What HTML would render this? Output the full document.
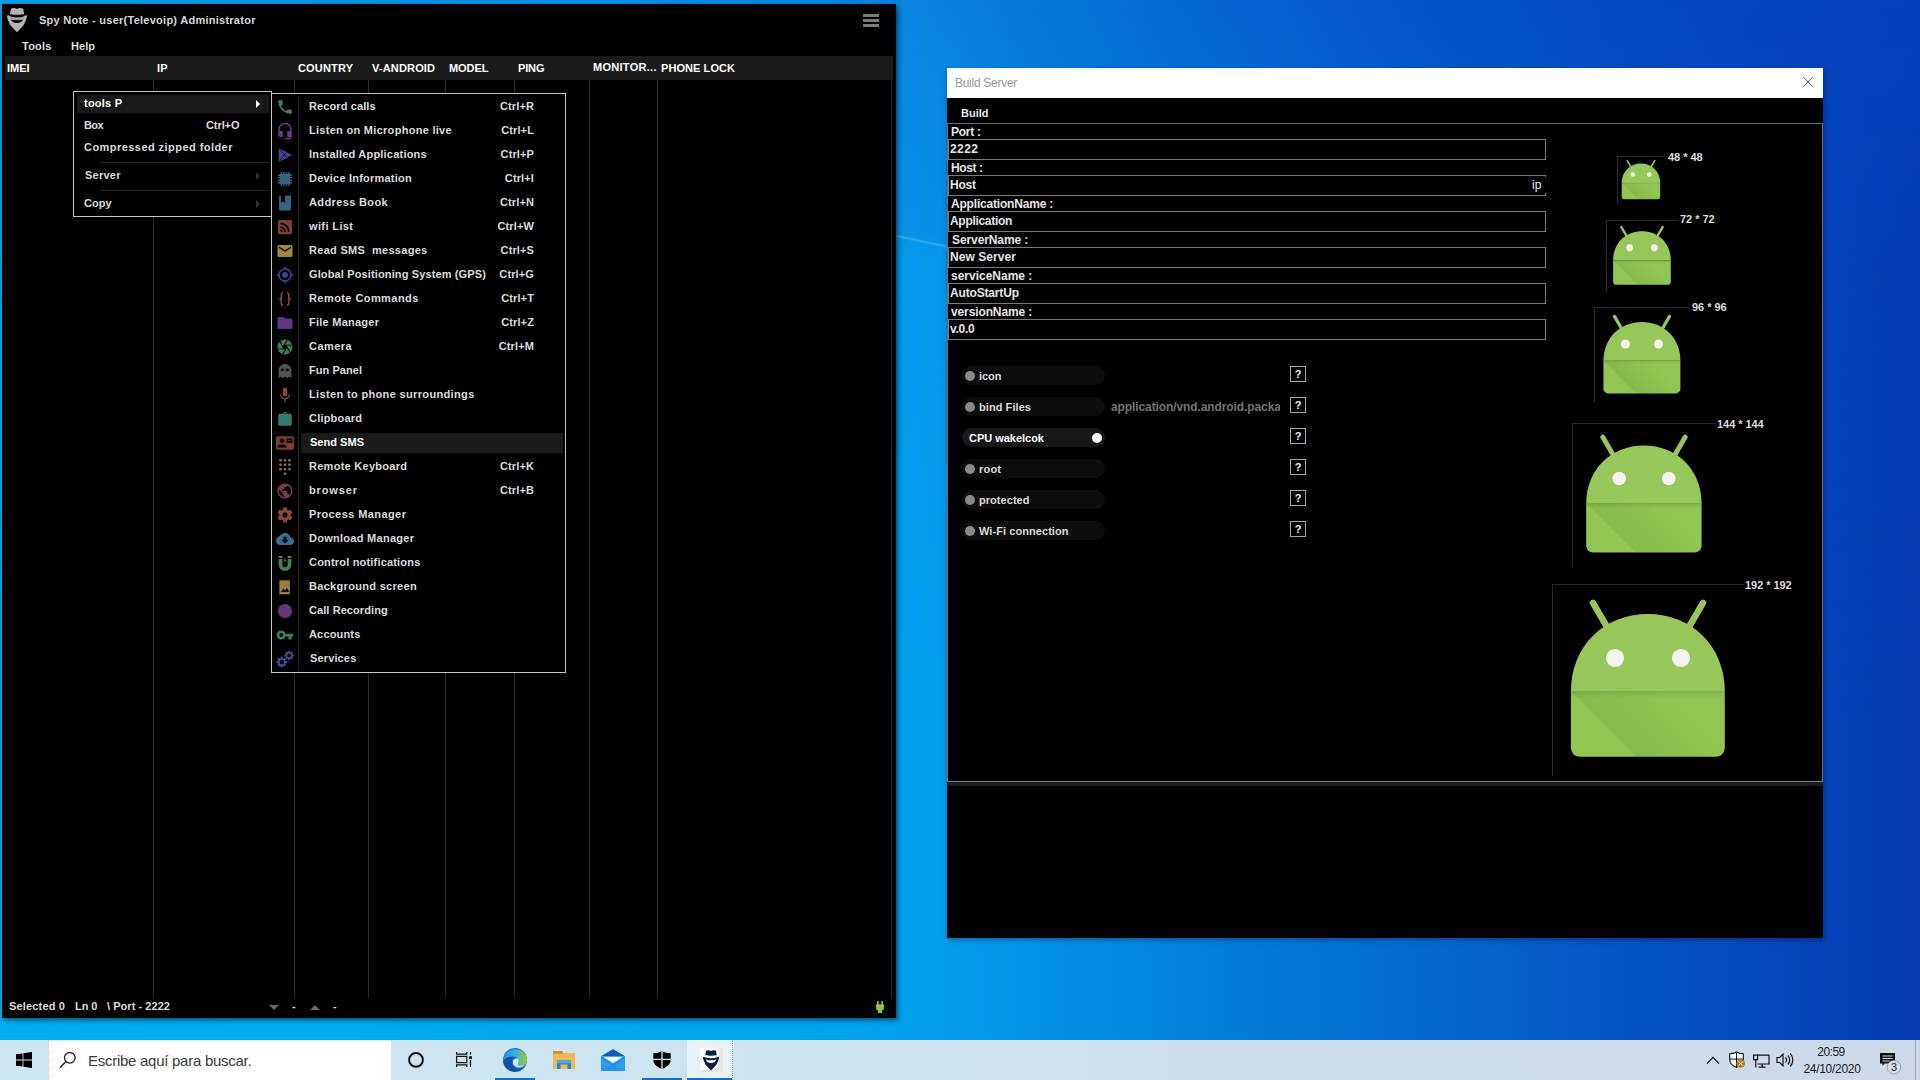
<!DOCTYPE html><html><head><meta charset="utf-8"><title>Desktop</title><style>
*{box-sizing:border-box;margin:0;padding:0}
html,body{width:1920px;height:1080px;overflow:hidden}
body{position:relative;font-family:"Liberation Sans",sans-serif;font-size:11px;color:#ddd;background:#0060d0}
.abs{position:absolute}
.t{position:absolute;white-space:pre;font-weight:bold;font-size:11px;letter-spacing:.3px;line-height:14px;color:#dcdcdc}
#wall{position:absolute;left:0;top:0;width:1920px;height:1080px;
 background:linear-gradient(90deg,#00a2ec 0,#0096e8 600px,#0a86e2 900px,#066cd6 1150px,#0556ca 1400px,#0548c2 1650px,#0542bc 1920px)}
#wall2{position:absolute;left:0;top:0;width:1920px;height:1080px;
 background:linear-gradient(90deg,#00aef0 0,#00a6ee 800px,#04a0f0 915px,#0286e0 1150px,#046cd2 1400px,#0552c4 1650px,#053cb4 1920px);
 -webkit-mask-image:linear-gradient(180deg,rgba(0,0,0,0) 0,rgba(0,0,0,.5) 230px,rgba(0,0,0,.78) 260px,#000 720px);
 mask-image:linear-gradient(180deg,rgba(0,0,0,0) 0,rgba(0,0,0,.5) 230px,rgba(0,0,0,.78) 260px,#000 720px)}
#main{position:absolute;left:2px;top:4px;width:894px;height:1014px;background:#000;box-shadow:2px 2px 5px rgba(0,0,0,.55)}
#bs{position:absolute;left:947px;top:68px;width:876px;height:870px;background:#000;box-shadow:1px 2px 5px rgba(0,0,30,.35)}
.vl{position:absolute;width:1px;height:918px;background:#25282c}
.menu{position:absolute;background:#000;border:1px solid #c6c6c6}
.sc{position:absolute;white-space:pre;font-weight:bold;font-size:11px;letter-spacing:.12px;line-height:14px;color:#dcdcdc;text-align:right}
.inp{position:absolute;left:1px;width:598px;height:21px;border:1px solid #7c7c7c}
.f12{position:absolute;white-space:pre;font-weight:bold;font-size:12px;line-height:14px;color:#e6e6e6}
.pill{position:absolute;left:15px;width:143px;height:19px;border-radius:10px;background:#0d0d0c}
.dot{position:absolute;width:10px;height:10px;border-radius:5px;background:#8a8888;top:5px}
.q{position:absolute;left:343px;width:16px;height:16px;border:1px solid #a8a8a8;color:#f0f0f0;font-weight:bold;font-size:11px;line-height:14px;text-align:center}
.szl{position:absolute;white-space:pre;font-weight:bold;font-size:11px;line-height:14px;color:#ddd}
#tb{position:absolute;left:0;top:1040px;width:1920px;height:40px;background:linear-gradient(90deg,#cce6f2 0,#cde3f0 45%,#ccdcec 70%,#cdd9eb 100%)}
</style></head><body>
<svg width="0" height="0" style="position:absolute"><defs>
<linearGradient id="dsh" gradientUnits="userSpaceOnUse" x1="52" y1="140" x2="100" y2="92"><stop offset="0" stop-color="#3c6e1e" stop-opacity=".13"/><stop offset="1" stop-color="#3c6e1e" stop-opacity="0"/></linearGradient>
<linearGradient id="dfold" gradientUnits="userSpaceOnUse" x1="0" y1="106" x2="0" y2="114"><stop offset="0" stop-color="#3c6e1e" stop-opacity=".24"/><stop offset="1" stop-color="#3c6e1e" stop-opacity="0"/></linearGradient>
<symbol id="droid" viewBox="0 0 192 192">
<g stroke="#97c65a" stroke-width="6.500" stroke-linecap="round"><path d="M41 18.800L58 48"/><path d="M151 18.800L134 48"/></g>
<path d="M18.900 107.500C18.900 62 52 30 95.850 30C139.700 30 172.800 62 172.800 107.500Z" fill="#97c65a"/>
<path d="M18.900 107H172.800V163.800a9 9 0 0 1-9 9H27.900a9 9 0 0 1-9-9Z" fill="#92c553"/>
<path d="M18.900 107H172.800V172.800H84.700Z" fill="url(#dsh)"/>
<path d="M18.900 107H172.800V114H18.900Z" fill="url(#dfold)"/>
<circle cx="63" cy="74" r="9.100" fill="#f1f5ec"/><circle cx="129" cy="74" r="9.100" fill="#f1f5ec"/>
</symbol>
</defs></svg>
<div id="wall"></div><div id="wall2"></div>
<div class="abs" style="left:896px;top:0;width:51px;height:1040px;overflow:hidden"><div class="abs" style="left:0;top:234px;width:56px;height:4px;transform-origin:0 0;transform:rotate(12deg);background:linear-gradient(180deg,rgba(120,200,255,.0),rgba(120,200,255,.4) 40%,rgba(120,200,255,0))"></div></div>
<div id="main">
<svg class="abs" style="left:2px;top:0px" width="30" height="32" viewBox="4 4 30 32"><g fill="#b4b4b4"><path d="M10 14.300L10.900 8.800Q14 7.300 17 8.900Q20 7.300 23.200 8.800L24.200 14.300Q17 15.400 10 14.300Z"/><path d="M6.800 15.800Q8 14.700 9.500 15.800Q17 18.600 24.600 15.800Q26 14.700 27.200 15.800L25.800 20.500L23.600 25.300L17 32.200L10.300 25.300L8.100 20.500Z"/></g><path d="M10.600 14.400Q17 16 23.600 14.400L23.800 16.400Q17 18.200 10.400 16.400Z" fill="#000"/><path d="M10.800 19.600Q17 21 23.200 19.600Q21.500 23 17 23Q12.500 23 10.800 19.600Z" fill="#000"/><path d="M10.300 17.400Q17 19.200 23.700 17.400L23.500 19.400Q17 20.800 10.500 19.400Z" fill="#9c9c9c"/></svg>
<div class="t" style="left:37px;top:9px;letter-spacing:0.259px;color:#d8d8d8;">Spy Note - user(Televoip) Administrator</div>
<div class="abs" style="left:861px;top:10px;width:16px;height:3px;background:#7a7a7a"></div>
<div class="abs" style="left:861px;top:15px;width:16px;height:3px;background:#7a7a7a"></div>
<div class="abs" style="left:861px;top:20px;width:16px;height:3px;background:#7a7a7a"></div>
<div class="t" style="left:20px;top:35px;letter-spacing:0.242px;">Tools</div>
<div class="t" style="left:69px;top:35px;letter-spacing:0.052px;">Help</div>
<div class="abs" style="left:3px;top:52px;width:888px;height:24px;background:#1b1b1b"></div>
<div class="t" style="left:5px;top:57px;letter-spacing:-0.042px;color:#fff;">IMEI</div>
<div class="t" style="left:155px;top:57px;letter-spacing:0.094px;color:#fff;">IP</div>
<div class="t" style="left:296px;top:57px;letter-spacing:0.172px;color:#fff;">COUNTRY</div>
<div class="t" style="left:370px;top:57px;letter-spacing:0.162px;color:#fff;">V-ANDROID</div>
<div class="t" style="left:447px;top:57px;letter-spacing:-0.055px;color:#fff;">MODEL</div>
<div class="t" style="left:516px;top:57px;letter-spacing:-0.135px;color:#fff;">PING</div>
<div class="t" style="left:591px;top:56px;letter-spacing:0.286px;color:#fff;">MONITOR...</div>
<div class="t" style="left:659px;top:57px;letter-spacing:0.073px;color:#fff;">PHONE LOCK</div>
<div class="vl" style="left:151px;top:76px"></div>
<div class="vl" style="left:292px;top:76px"></div>
<div class="vl" style="left:366px;top:76px"></div>
<div class="vl" style="left:443px;top:76px"></div>
<div class="vl" style="left:512px;top:76px"></div>
<div class="vl" style="left:587px;top:76px"></div>
<div class="vl" style="left:655px;top:76px"></div>
<div class="vl" style="left:889px;top:76px"></div>
<div class="t" style="left:7px;top:995px;letter-spacing:0.17px;">Selected 0</div>
<div class="t" style="left:73px;top:995px;letter-spacing:-0.042px;">Ln 0</div>
<div class="t" style="left:105px;top:995px;letter-spacing:0.049px;">\ Port - 2222</div>
<div class="abs" style="left:267px;top:1001px;width:0;height:0;border-left:5px solid transparent;border-right:5px solid transparent;border-top:5px solid #6a6a6a"></div>
<div class="t" style="left:290px;top:995px;">-</div>
<div class="abs" style="left:308px;top:1001px;width:0;height:0;border-left:5px solid transparent;border-right:5px solid transparent;border-bottom:5px solid #6a6a6a"></div>
<div class="t" style="left:331px;top:995px;">-</div>
<svg class="abs" style="left:873px;top:996px" width="10" height="14" viewBox="0 0 10 14"><path fill="#8bc34a" d="M2 1h1.600v3.200h2.800V1H8v3.200h1V8c0 1.500-1 2.300-2 2.800V13H3v-2.200C2 10.300 1 9.500 1 8V4.200h1z"/></svg>
<div class="menu" style="left:71px;top:87px;width:199px;height:126px">
<div class="abs" style="left:3px;top:3px;width:192px;height:18px;background:#1a1a1a"></div>
<div class="t" style="left:10px;top:4px;letter-spacing:0.219px;color:#fff;">tools P</div>
<div class="t" style="left:10px;top:26px;letter-spacing:-0.641px;">Box</div>
<div class="t" style="left:10px;top:48px;letter-spacing:0.448px;">Compressed zipped folder</div>
<div class="t" style="left:11px;top:76px;letter-spacing:0.244px;">Server</div>
<div class="t" style="left:10px;top:104px;letter-spacing:0.0px;">Copy</div>
<div class="t" style="left:132px;top:26px;letter-spacing:-0.084px;">Ctrl+O</div>
<div class="abs" style="left:26px;top:70px;width:169px;height:1px;background:#242424"></div>
<div class="abs" style="left:26px;top:98px;width:169px;height:1px;background:#242424"></div>
<div class="abs" style="left:182px;top:8px;width:0;height:0;border-top:4px solid transparent;border-bottom:4px solid transparent;border-left:4px solid #fff"></div>
<div class="abs" style="left:182px;top:80px;width:0;height:0;border-top:4px solid transparent;border-bottom:4px solid transparent;border-left:4px solid #333"></div>
<div class="abs" style="left:182px;top:108px;width:0;height:0;border-top:4px solid transparent;border-bottom:4px solid transparent;border-left:4px solid #333"></div>
</div>
<div class="menu" style="left:269px;top:89px;width:295px;height:580px">
<div class="abs" style="left:26px;top:2px;width:1px;height:574px;background:#242424"></div>
<div class="t" style="left:37px;top:5px;letter-spacing:0.112px;">Record calls</div>
<div class="sc" style="left:162px;width:100px;top:5px">Ctrl+R</div>
<svg class="abs" style="left:4px;top:4px;color:#38806f" width="18" height="18" viewBox="0 0 24 24" fill="#38806f"><path d="M6.62 10.79c1.44 2.83 3.76 5.14 6.59 6.59l2.2-2.2c.27-.27.67-.36 1.02-.24 1.12.37 2.33.57 3.57.57.55 0 1 .45 1 1V20c0 .55-.45 1-1 1-9.39 0-17-7.61-17-17 0-.55.45-1 1-1h3.5c.55 0 1 .45 1 1 0 1.25.2 2.45.57 3.57.11.35.03.74-.25 1.02l-2.2 2.2z"/></svg>
<div class="t" style="left:37px;top:29px;letter-spacing:0.29px;">Listen on Microphone live</div>
<div class="sc" style="left:162px;width:100px;top:29px">Ctrl+L</div>
<svg class="abs" style="left:4px;top:28px;color:#703b87" width="18" height="18" viewBox="0 0 24 24" fill="#703b87"><path d="M12 1c-4.97 0-9 4.03-9 9v7c0 1.66 1.34 3 3 3h3v-8H5v-2c0-3.870 3.130-7 7-7s7 3.130 7 7v2h-4v8h4v1h-7v2h6c1.660 0 3-1.340 3-3V10c0-4.970-4.030-9-9-9z"/></svg>
<div class="t" style="left:37px;top:53px;letter-spacing:0.207px;">Installed Applications</div>
<div class="sc" style="left:162px;width:100px;top:53px">Ctrl+P</div>
<svg class="abs" style="left:4px;top:52px;color:#424990" width="18" height="18" viewBox="0 0 24 24" fill="#424990"><path d="M3.500 2.500 L3.500 21.500 L21.500 12 Z"/><path d="M3.500 2.500 L14 15.500 M3.500 21.500 L14 8.500" stroke="#000" stroke-width=".8" fill="none"/></svg>
<div class="t" style="left:37px;top:77px;letter-spacing:0.214px;">Device Information</div>
<div class="sc" style="left:162px;width:100px;top:77px">Ctrl+I</div>
<svg class="abs" style="left:4px;top:76px;color:#35637e" width="18" height="18" viewBox="0 0 24 24" fill="#35637e"><path d="M5 5h14v14H5z"/><path d="M7 2.500v19M10.300 2.500v19M13.700 2.500v19M17 2.500v19M2.500 7h19M2.500 10.300h19M2.500 13.700h19M2.500 17h19" stroke-width="1.700" fill="none" stroke="currentColor"/></svg>
<div class="t" style="left:37px;top:101px;letter-spacing:0.373px;">Address Book</div>
<div class="sc" style="left:162px;width:100px;top:101px">Ctrl+N</div>
<svg class="abs" style="left:4px;top:100px;color:#35637e" width="18" height="18" viewBox="0 0 24 24" fill="#35637e"><path d="M18 2H6c-1.100 0-2 .900-2 2v16c0 1.100.900 2 2 2h12c1.100 0 2-.900 2-2V4c0-1.100-.900-2-2-2zM6.500 2h5.500v9.500l-2.750-1.700L6.500 11.500V2z"/></svg>
<div class="t" style="left:37px;top:125px;letter-spacing:0.379px;">wifi List</div>
<div class="sc" style="left:162px;width:100px;top:125px">Ctrl+W</div>
<svg class="abs" style="left:4px;top:124px;color:#7c4032" width="18" height="18" viewBox="0 0 24 24" fill="#7c4032"><rect x="2.500" y="2.500" width="19" height="19" rx="2.500"/><g fill="none" stroke="#000" stroke-width="2.200"><path d="M6 12.200a6 6 0 0 1 6 6"/><path d="M6 7.200a11 11 0 0 1 11 11"/></g><circle cx="7.300" cy="16.900" r="1.600" fill="#000"/></svg>
<div class="t" style="left:37px;top:149px;letter-spacing:0.301px;">Read SMS  messages</div>
<div class="sc" style="left:162px;width:100px;top:149px">Ctrl+S</div>
<svg class="abs" style="left:4px;top:148px;color:#9e8a39" width="18" height="18" viewBox="0 0 24 24" fill="#9e8a39"><path d="M20 4H4c-1.100 0-1.990.900-1.990 2L2 18c0 1.100.900 2 2 2h16c1.100 0 2-.900 2-2V6c0-1.100-.900-2-2-2zm0 4l-8 5-8-5V6l8 5 8-5v2z"/></svg>
<div class="t" style="left:37px;top:173px;letter-spacing:0.131px;">Global Positioning System (GPS)</div>
<div class="sc" style="left:162px;width:100px;top:173px">Ctrl+G</div>
<svg class="abs" style="left:4px;top:172px;color:#364c90" width="18" height="18" viewBox="0 0 24 24" fill="#364c90"><path d="M12 8c-2.210 0-4 1.790-4 4s1.790 4 4 4 4-1.790 4-4-1.790-4-4-4zm8.940 3c-.460-4.170-3.770-7.480-7.940-7.940V1h-2v2.060C6.830 3.520 3.520 6.830 3.060 11H1v2h2.060c.460 4.170 3.770 7.480 7.940 7.940V23h2v-2.060c4.170-.460 7.480-3.770 7.940-7.940H23v-2h-2.060zM12 19c-3.870 0-7-3.130-7-7s3.130-7 7-7 7 3.130 7 7-3.130 7-7 7z"/></svg>
<div class="t" style="left:37px;top:197px;letter-spacing:0.428px;">Remote Commands</div>
<div class="sc" style="left:162px;width:100px;top:197px">Ctrl+T</div>
<svg class="abs" style="left:4px;top:196px;color:#905134" width="18" height="18" viewBox="0 0 24 24" fill="#905134"><g fill="none" stroke="currentColor" stroke-width="1.900"><path d="M9.500 4C7.500 4 7 5 7 6.500v3C7 11 6.300 12 4.500 12 6.300 12 7 13 7 14.500v3C7 19 7.500 20 9.500 20"/><path d="M14.500 4c2 0 2.500 1 2.500 2.500v3c0 1.500.700 2.500 2.500 2.500-1.800 0-2.500 1-2.500 2.500v3c0 1.500-.500 2.500-2.500 2.500"/></g></svg>
<div class="t" style="left:37px;top:221px;letter-spacing:0.247px;">File Manager</div>
<div class="sc" style="left:162px;width:100px;top:221px">Ctrl+Z</div>
<svg class="abs" style="left:4px;top:220px;color:#633685" width="18" height="18" viewBox="0 0 24 24" fill="#633685"><path d="M10 4H4c-1.100 0-1.990.900-1.990 2L2 18c0 1.100.900 2 2 2h16c1.100 0 2-.900 2-2V8c0-1.100-.900-2-2-2h-8l-2-2z"/></svg>
<div class="t" style="left:37px;top:245px;letter-spacing:0.465px;">Camera</div>
<div class="sc" style="left:162px;width:100px;top:245px">Ctrl+M</div>
<svg class="abs" style="left:4px;top:244px;color:#427c54" width="18" height="18" viewBox="0 0 24 24" fill="#427c54"><path d="M9.400 10.500l4.770-8.260C13.470 2.090 12.750 2 12 2c-2.400 0-4.600.850-6.320 2.250l3.660 6.350.060-.100zM21.540 9c-.920-2.920-3.150-5.260-6-6.340L11.880 9h9.660zm.260 1h-7.490l.290.500 4.760 8.250C21 16.970 22 14.610 22 12c0-.690-.070-1.350-.200-2zM8.540 12l-3.900-6.750C3.010 7.030 2 9.390 2 12c0 .690.070 1.350.200 2h7.490l-1.150-2zm-6.080 3c.920 2.920 3.150 5.260 6 6.340L12.120 15H2.460zm11.270 0l-3.900 6.760c.700.150 1.420.240 2.170.240 2.400 0 4.600-.850 6.320-2.250l-3.660-6.350-.930 1.600z"/></svg>
<div class="t" style="left:37px;top:269px;letter-spacing:0.051px;">Fun Panel</div>
<svg class="abs" style="left:4px;top:268px;color:#525252" width="18" height="18" viewBox="0 0 24 24" fill="#525252"><path d="M12 2.500c-5 0-8.500 3.600-8.500 8.500v10.500l2.800-2.200 2.900 2.200 2.800-2.200 2.800 2.200 2.900-2.200 2.800 2.200V11c0-4.900-3.500-8.500-8.500-8.500z"/><circle cx="8.600" cy="10.500" r="1.900" fill="#000"/><circle cx="15.400" cy="10.500" r="1.900" fill="#000"/></svg>
<div class="t" style="left:37px;top:293px;letter-spacing:0.349px;">Listen to phone surroundings</div>
<svg class="abs" style="left:4px;top:292px;color:#904634" width="18" height="18" viewBox="0 0 24 24" fill="#904634"><path d="M12 14c1.660 0 2.990-1.340 2.990-3L15 5c0-1.660-1.340-3-3-3S9 3.340 9 5v6c0 1.660 1.340 3 3 3zm5.300-3c0 3-2.540 5.100-5.300 5.100S6.700 14 6.700 11H5c0 3.410 2.720 6.230 6 6.720V21h2v-3.280c3.280-.480 6-3.300 6-6.720h-1.700z"/></svg>
<div class="t" style="left:37px;top:317px;letter-spacing:0.207px;">Clipboard</div>
<svg class="abs" style="left:4px;top:316px;color:#387a6c" width="18" height="18" viewBox="0 0 24 24" fill="#387a6c"><path d="M19 5h-4.200C14.400 3.300 13.300 2.200 12 2.200S9.600 3.300 9.200 5H5c-1.100 0-2 .900-2 2v12c0 1.100.900 2 2 2h14c1.100 0 2-.900 2-2V7c0-1.100-.900-2-2-2zm-7-1.500c.700 0 1.300.600 1.400 1.500h-2.800c.100-.900.700-1.500 1.400-1.500z"/></svg>
<div class="abs" style="left:29px;top:339px;width:262px;height:20px;background:#1a1a1a"></div>
<div class="t" style="left:38px;top:341px;letter-spacing:0.027px;color:#fff;">Send SMS</div>
<svg class="abs" style="left:4px;top:340px;color:#7e3a2a" width="18" height="18" viewBox="0 0 24 24" fill="#7e3a2a"><path d="M21 8V7l-3 2-3-2v1l3 2 3-2zm1-5H2C.900 3 0 3.900 0 5v14c0 1.100.900 2 2 2h20c1.100 0 1.990-.900 1.990-2L24 5c0-1.100-.900-2-2-2zM8 6c1.660 0 3 1.340 3 3s-1.340 3-3 3-3-1.340-3-3 1.340-3 3-3zm6 12H2v-1c0-2 4-3.100 6-3.100s6 1.100 6 3.100v1zm8-6h-8V6h8v6z"/></svg>
<div class="t" style="left:37px;top:365px;letter-spacing:0.275px;">Remote Keyboard</div>
<div class="sc" style="left:162px;width:100px;top:365px">Ctrl+K</div>
<svg class="abs" style="left:4px;top:364px;color:#907c34" width="18" height="18" viewBox="0 0 24 24" fill="#907c34"><circle cx="6" cy="3" r="1.800"/><circle cx="6" cy="9" r="1.800"/><circle cx="6" cy="15" r="1.800"/><circle cx="12" cy="3" r="1.800"/><circle cx="12" cy="9" r="1.800"/><circle cx="12" cy="15" r="1.800"/><circle cx="18" cy="3" r="1.800"/><circle cx="18" cy="9" r="1.800"/><circle cx="18" cy="15" r="1.800"/><circle cx="12" cy="21" r="1.800"/></svg>
<div class="t" style="left:37px;top:389px;letter-spacing:0.865px;">browser</div>
<div class="sc" style="left:162px;width:100px;top:389px">Ctrl+B</div>
<svg class="abs" style="left:4px;top:388px;color:#7c3851" width="18" height="18" viewBox="0 0 24 24" fill="#7c3851"><path d="M12 2C6.480 2 2 6.480 2 12s4.480 10 10 10 10-4.480 10-10S17.520 2 12 2zm-1 17.930c-3.950-.490-7-3.850-7-7.930 0-.620.080-1.210.210-1.790L9 15v1c0 1.100.900 2 2 2v1.930zm6.900-2.540c-.260-.810-1-1.390-1.900-1.390h-1v-3c0-.550-.450-1-1-1H8v-2h2c.550 0 1-.450 1-1V7h2c1.100 0 2-.900 2-2v-.410c2.930 1.190 5 4.060 5 7.410 0 2.080-.800 3.970-2.100 5.390z"/></svg>
<div class="t" style="left:37px;top:413px;letter-spacing:0.417px;">Process Manager</div>
<svg class="abs" style="left:4px;top:412px;color:#904634" width="18" height="18" viewBox="0 0 24 24" fill="#904634"><path d="M19.430 12.980c.040-.320.070-.640.070-.980s-.030-.660-.070-.980l2.110-1.650c.190-.150.240-.420.120-.640l-2-3.460c-.120-.220-.390-.300-.610-.220l-2.490 1c-.520-.400-1.080-.730-1.690-.980l-.380-2.650C14.460 2.180 14.250 2 14 2h-4c-.250 0-.460.180-.490.420l-.380 2.650c-.610.250-1.170.590-1.690.980l-2.490-1c-.230-.090-.490 0-.610.220l-2 3.460c-.130.220-.070.490.120.640l2.110 1.650c-.040.320-.070.650-.070.980s.030.660.070.980l-2.110 1.650c-.190.150-.240.420-.120.640l2 3.460c.120.220.390.300.610.220l2.490-1c.520.400 1.080.730 1.690.980l.380 2.650c.030.240.240.420.490.420h4c.250 0 .460-.180.490-.420l.380-2.650c.610-.250 1.170-.590 1.690-.980l2.490 1c.230.090.490 0 .610-.220l2-3.460c.120-.220.070-.490-.120-.640l-2.110-1.650zM12 15.500c-1.930 0-3.500-1.570-3.500-3.500s1.570-3.500 3.500-3.500 3.500 1.570 3.500 3.500-1.570 3.500-3.500 3.500z"/></svg>
<div class="t" style="left:37px;top:437px;letter-spacing:0.275px;">Download Manager</div>
<svg class="abs" style="left:4px;top:436px;color:#386d97" width="18" height="18" viewBox="0 0 24 24" fill="#386d97"><path d="M19.350 10.040C18.670 6.590 15.640 4 12 4 9.110 4 6.600 5.640 5.350 8.040 2.340 8.360 0 10.910 0 14c0 3.310 2.690 6 6 6h13c2.760 0 5-2.240 5-5 0-2.640-2.050-4.780-4.650-4.960zM17 13l-5 5-5-5h3V9h4v4h3z"/></svg>
<div class="t" style="left:37px;top:461px;letter-spacing:0.187px;">Control notifications</div>
<svg class="abs" style="left:4px;top:460px;color:#42815d" width="18" height="18" viewBox="0 0 24 24" fill="#42815d"><path d="M3.500 6.500h5v7.500a3.500 3.500 0 0 0 7 0V6.500h5V14a8.500 8.500 0 0 1-17 0z"/><path d="M3.500 2.500h5v2.500h-5zM15.500 2.500h5v2.500h-5z" fill="#8f7e38"/><path d="M12.800 4l-2.600 5h1.800l-.800 4 2.800-5.200h-1.900z"/></svg>
<div class="t" style="left:37px;top:485px;letter-spacing:0.309px;">Background screen</div>
<svg class="abs" style="left:4px;top:484px;color:#978139" width="18" height="18" viewBox="0 0 24 24" fill="#978139"><path d="M5.500 2.500l1.500 1 1.500-1 1.500 1 1.500-1 1.500 1 1.500-1 1.500 1 1.500-1 1 .700V21.500H4.500V3.200z"/><path d="M6.500 18.500l3.500-4.500 2 2.500 2.500-3.500 3 5.500z" fill="#000"/></svg>
<div class="t" style="left:37px;top:509px;letter-spacing:0.08px;">Call Recording</div>
<svg class="abs" style="left:4px;top:508px;color:#633676" width="18" height="18" viewBox="0 0 24 24" fill="#633676"><circle cx="12" cy="12" r="9.500"/></svg>
<div class="t" style="left:37px;top:533px;letter-spacing:0.168px;">Accounts</div>
<svg class="abs" style="left:4px;top:532px;color:#427c51" width="18" height="18" viewBox="0 0 24 24" fill="#427c51"><path fill-rule="evenodd" d="M7 6a6 6 0 1 0 0 12a6 6 0 0 0 5.600-4H16.500v4h4.500v-4H23v-3.600H12.600A6 6 0 0 0 7 6zM7 9.400a2.600 2.600 0 1 1 0 5.200a2.600 2.600 0 0 1 0-5.200z"/></svg>
<div class="t" style="left:38px;top:557px;letter-spacing:0.141px;">Services</div>
<svg class="abs" style="left:4px;top:556px;color:#3d4f97" width="18" height="18" viewBox="0 0 24 24" fill="#3d4f97"><path fill-rule="evenodd" d="M14.53 14.77 L14.53 17.83 L12.69 17.75 L12.26 18.81 L13.61 20.05 L11.45 22.21 L10.21 20.86 L9.15 21.29 L9.23 23.13 L6.17 23.13 L6.25 21.29 L5.19 20.86 L3.95 22.21 L1.79 20.05 L3.14 18.81 L2.71 17.75 L0.87 17.83 L0.87 14.77 L2.71 14.85 L3.14 13.79 L1.79 12.55 L3.95 10.39 L5.19 11.74 L6.25 11.31 L6.17 9.47 L9.23 9.47 L9.15 11.31 L10.21 11.74 L11.45 10.39 L13.61 12.55 L12.26 13.79 L12.69 14.85Z M10.60 16.30 A2.9 2.9 0 1 0 4.80 16.30 A2.9 2.9 0 1 0 10.60 16.30Z"/><path fill-rule="evenodd" d="M23.75 5.90 L23.75 8.70 L22.01 8.61 L21.62 9.56 L22.90 10.73 L20.93 12.70 L19.76 11.42 L18.81 11.81 L18.90 13.55 L16.10 13.55 L16.19 11.81 L15.24 11.42 L14.07 12.70 L12.10 10.73 L13.38 9.56 L12.99 8.61 L11.25 8.70 L11.25 5.90 L12.99 5.99 L13.38 5.04 L12.10 3.87 L14.07 1.90 L15.24 3.18 L16.19 2.79 L16.10 1.05 L18.90 1.05 L18.81 2.79 L19.76 3.18 L20.93 1.90 L22.90 3.87 L21.62 5.04 L22.01 5.99Z M20.00 7.30 A2.5 2.5 0 1 0 15.00 7.30 A2.5 2.5 0 1 0 20.00 7.30Z"/></svg>
</div>
</div>
<div id="bs">
<div class="abs" style="left:0;top:0;width:876px;height:30px;background:#fff"></div>
<div class="abs" style="left:8px;top:7px;font-size:12px;color:#9a9a9a;line-height:16px;white-space:pre;letter-spacing:-0.278px">Build Server</div>
<svg class="abs" style="left:856px;top:9px" width="10" height="10" viewBox="0 0 10 10"><path d="M0.300 0.300L9.700 9.700M9.700 0.300L0.300 9.700" stroke="#606060" stroke-width="1" fill="none"/></svg>
<div class="t" style="left:14px;top:38px;letter-spacing:0.0px;color:#e8e8e8;">Build</div>
<div class="abs" style="left:0;top:55px;width:876px;height:659px;border:1px solid #6c6c6c;border-bottom:none"></div>
<div class="abs" style="left:0;top:713px;width:876px;height:5px;background:linear-gradient(#7c7c7c 0,#7c7c7c 1px,#1c1c1c 1px,#1c1c1c 100%)"></div>
<div class="inp" style="top:71px"></div>
<div class="f12" style="left:4px;top:57px;letter-spacing:-0.266px;">Port :</div>
<div class="f12" style="left:3px;top:74px;letter-spacing:0.438px;">2222</div>
<div class="inp" style="top:107px"></div>
<div class="f12" style="left:4px;top:93px;letter-spacing:-0.4px;">Host :</div>
<div class="f12" style="left:3px;top:110px;letter-spacing:-0.224px;">Host</div>
<div class="inp" style="top:143px"></div>
<div class="f12" style="left:4px;top:129px;letter-spacing:-0.189px;">ApplicationName :</div>
<div class="f12" style="left:3px;top:146px;letter-spacing:-0.301px;">Application</div>
<div class="inp" style="top:179px"></div>
<div class="f12" style="left:5px;top:165px;letter-spacing:-0.098px;">ServerName :</div>
<div class="f12" style="left:3px;top:182px;letter-spacing:0.071px;">New Server</div>
<div class="inp" style="top:215px"></div>
<div class="f12" style="left:4px;top:201px;letter-spacing:-0.006px;">serviceName :</div>
<div class="f12" style="left:3px;top:218px;letter-spacing:-0.167px;">AutoStartUp</div>
<div class="inp" style="top:251px"></div>
<div class="f12" style="left:4px;top:237px;letter-spacing:-0.116px;">versionName :</div>
<div class="f12" style="left:3px;top:254px;letter-spacing:-0.27px;">v.0.0</div>
<div class="abs" style="left:582px;top:109px;width:18px;height:16px;background:#000"></div>
<div class="f12" style="left:585px;top:110px;font-weight:normal">ip</div>
<div class="pill" style="top:298px;">
<div class="dot" style="left:3px"></div><div class="t" style="left:17px;top:3px;letter-spacing:-0.042px;">icon</div>
</div>
<div class="q" style="top:298px">?</div>
<div class="pill" style="top:329px;">
<div class="dot" style="left:3px"></div><div class="t" style="left:17px;top:3px;letter-spacing:0.069px;">bind Files</div>
</div>
<div class="q" style="top:329px">?</div>
<div class="pill" style="top:360px;background:#181818">
<div class="dot" style="left:130px;background:#fff"></div><div class="t" style="left:7px;top:3px;letter-spacing:-0.023px;color:#fff;">CPU wakelcok</div>
</div>
<div class="q" style="top:360px">?</div>
<div class="pill" style="top:391px;">
<div class="dot" style="left:3px"></div><div class="t" style="left:17px;top:3px;letter-spacing:0.208px;">root</div>
</div>
<div class="q" style="top:391px">?</div>
<div class="pill" style="top:422px;">
<div class="dot" style="left:3px"></div><div class="t" style="left:17px;top:3px;letter-spacing:0.047px;">protected</div>
</div>
<div class="q" style="top:422px">?</div>
<div class="pill" style="top:453px;">
<div class="dot" style="left:3px"></div><div class="t" style="left:17px;top:3px;letter-spacing:0.065px;">Wi-Fi connection</div>
</div>
<div class="q" style="top:453px">?</div>
<div class="abs" style="left:164px;top:332px;width:169px;height:16px;overflow:hidden;white-space:pre;font-weight:bold;font-size:12px;color:#747474;line-height:14px;letter-spacing:-.1px">application/vnd.android.package-archive</div>
<div class="abs" style="left:670px;top:88px;width:48px;height:48px;border-left:1px solid #2a2a2a;border-top:1px solid #2a2a2a"></div>
<svg class="abs" style="left:670px;top:88px" width="48" height="48"><use href="#droid"/></svg>
<div class="szl" style="left:720px;top:82px;background:#000;padding:0 1px;letter-spacing:-.05px">48 * 48</div>
<div class="abs" style="left:659px;top:152px;width:72px;height:72px;border-left:1px solid #2a2a2a;border-top:1px solid #2a2a2a"></div>
<svg class="abs" style="left:659px;top:152px" width="72" height="72"><use href="#droid"/></svg>
<div class="szl" style="left:732px;top:144px;background:#000;padding:0 1px;letter-spacing:-.05px">72 * 72</div>
<div class="abs" style="left:647px;top:239px;width:96px;height:96px;border-left:1px solid #2a2a2a;border-top:1px solid #2a2a2a"></div>
<svg class="abs" style="left:647px;top:239px" width="96" height="96"><use href="#droid"/></svg>
<div class="szl" style="left:744px;top:232px;background:#000;padding:0 1px;letter-spacing:-.05px">96 * 96</div>
<div class="abs" style="left:625px;top:355px;width:144px;height:144px;border-left:1px solid #2a2a2a;border-top:1px solid #2a2a2a"></div>
<svg class="abs" style="left:625px;top:355px" width="144" height="144"><use href="#droid"/></svg>
<div class="szl" style="left:769px;top:349px;background:#000;padding:0 1px;letter-spacing:-.05px">144 * 144</div>
<div class="abs" style="left:605px;top:516px;width:192px;height:192px;border-left:1px solid #2a2a2a;border-top:1px solid #2a2a2a"></div>
<svg class="abs" style="left:605px;top:516px" width="192" height="192"><use href="#droid"/></svg>
<div class="szl" style="left:797px;top:510px;background:#000;padding:0 1px;letter-spacing:-.05px">192 * 192</div>
</div>
<div id="tb">
<svg class="abs" style="left:16px;top:12px" width="16" height="16" viewBox="0 0 16 16"><path fill="#000" d="M0 2.300L6.600 1.400V7.500H0zM7.400 1.300L16 0V7.500H7.400zM0 8.400H6.600V14.600L0 13.700zM7.400 8.400H16V16L7.400 14.700z"/></svg>
<div class="abs" style="left:48px;top:0;width:343px;height:40px;background:#fff;border-left:1px dotted #b8c4cc;border-top:1px solid #e4e8ea"></div>
<svg class="abs" style="left:59px;top:11px" width="18" height="18" viewBox="0 0 18 18"><circle cx="10.800" cy="6.800" r="5.300" fill="none" stroke="#222" stroke-width="1.300"/><path d="M7 10.600L1 16.800" stroke="#222" stroke-width="1.500"/></svg>
<div class="abs" style="left:88px;top:10.500px;font-size:15px;line-height:20px;color:#3a3a3a;white-space:pre;letter-spacing:-.27px">Escribe aquí para buscar.</div>
<svg class="abs" style="left:407px;top:11px" width="18" height="18" viewBox="0 0 18 18"><circle cx="9" cy="8.900" r="6.900" fill="none" stroke="#0c0c0c" stroke-width="1.900"/></svg>
<svg class="abs" style="left:455px;top:11px" width="18" height="17" viewBox="0 0 18 17"><g fill="none" stroke="#111" stroke-width="1.250"><rect x="1.600" y="5.400" width="10.200" height="6.200"/><path d="M1.600 1V3.100H11.800V1M1.600 16V13.900H11.800V16M15.500 1V3.600M15.500 9V16"/></g><rect x="14.100" y="5.200" width="2.800" height="2.800" fill="#111"/></svg>
<svg class="abs" style="left:503px;top:8px" width="24" height="24" viewBox="0 0 24 24"><defs><linearGradient id="eg1" x1="0" y1="0" x2="1" y2="0"><stop offset="0" stop-color="#1f8fe0"/><stop offset=".55" stop-color="#3fb0e0"/><stop offset=".8" stop-color="#7cc455"/><stop offset="1" stop-color="#8acb4c"/></linearGradient></defs><circle cx="12" cy="12" r="12" fill="#1274d0"/><path d="M.400 10.500A12 12 0 0 1 24 11.500c0 4-2.800 6.300-6.200 6.300-2.700 0-3.600-1.500-2.800-3 1.300-2.400 0-5.800-4-6.400C7 7.800 2.500 9.500.400 13.500z" fill="url(#eg1)"/><path d="M14.700 10.600c1.300 1.300 1.200 3 .400 4.300-.8 1.400.300 2.900 2.700 2.900 2.300 0 4.400-1.100 5.500-3.200-.900 2.600-3.700 5-7.300 5-4 0-6.600-3-6-6.300.400-2 2.300-3.500 4.700-2.700z" fill="#cfe5f0"/><path d="M8.800 12.600c-.900 4.200 2.200 8.400 7.400 8.400 1.800 0 3.400-.500 4.700-1.400A12 12 0 0 1 .100 13.500C1.600 9.800 6.500 8 10.800 9.300c-1 .700-1.700 1.900-2 3.300z" fill="#14539f"/></svg>
<svg class="abs" style="left:553px;top:11px" width="22" height="18" viewBox="0 0 22 18"><path d="M0 0h9l1.500 2H22v16H0z" fill="#f1b955"/><path d="M0 0h9l1.200 1.600-1.200 1.200H0z" fill="#c98f38"/><path d="M4 9.400h14V18h-3.500v-4.500h-7V18H4z" fill="#1e84dc"/><path d="M4 9.400h14v3H4z" fill="#4aa9e4"/></svg>
<svg class="abs" style="left:601px;top:8.500px" width="24" height="22.500" viewBox="0 0 24 22.500"><path d="M0 7.200L12 0l12 7.200z" fill="#0b5db6"/><path d="M0 7.200h24v15.300H0z" fill="#2a9df4"/><path d="M2.600 7.900h18.800L12 14.300z" fill="#fbfbf6"/><path d="M0 7.200L12 15.500 24 7.200v1.500L12 17 0 8.700z" fill="#1b86de" opacity=".7"/><path d="M0 22.500L12 14.800 24 22.500z" fill="#1f8ee8" opacity=".55"/></svg>
<svg class="abs" style="left:653px;top:10.500px" width="18" height="18" viewBox="0 0 18 18"><path d="M9 0C6.500 1.600 3.500 2.200.300 2.200V8.500c0 4.600 3.500 7.600 8.700 9.500 5.200-1.900 8.700-4.900 8.700-9.500V2.200C14.500 2.200 11.500 1.600 9 0z" fill="#050505"/><path d="M9 0v18M0 8.300h18" stroke="#cbe2ee" stroke-width="1.300"/></svg>
<div class="abs" style="left:687px;top:0;width:45px;height:40px;background:#e7f2f8"></div>
<div class="abs" style="left:732px;top:0;width:2px;height:40px;background:#d6e6ee;border-left:1px dotted #8fa4ae"></div>
<svg class="abs" style="left:700px;top:8px" width="23" height="24" viewBox="0 0 23 24"><rect width="23" height="24" fill="#e9e6da"/><path d="M0 0h19.500L17 20l-15 2L0 24z" fill="#fbfcfc"/><g fill="#0c1a4a"><path d="M5.300 7.200L6 2.800Q8.600 1.600 11 2.900Q13.400 1.600 16 2.800L16.800 7.200Q11 8.100 5.300 7.200Z"/><path d="M2.800 9.300Q3.800 8.400 5 9.200Q11 11.400 17.100 9.200Q18.200 8.400 19.200 9.300L18.100 13L16.400 16.800L11 22.500L5.600 16.800L3.900 13Z"/></g><path d="M5.700 7.400Q11 8.600 16.500 7.400L16.700 8.900Q11 10.300 5.500 8.900Z" fill="#fbfcfc"/><path d="M5.800 11.500Q11 13.200 16.200 11.500Q15 15 11 15Q7 15 5.800 11.500Z" fill="#fbfcfc"/></svg>
<div class="abs" style="left:495px;top:38px;width:40px;height:2px;background:#0a74d6"></div>
<div class="abs" style="left:642px;top:38px;width:40px;height:2px;background:#0a74d6"></div>
<div class="abs" style="left:687px;top:38px;width:45px;height:2px;background:#0a74d6"></div>
<svg class="abs" style="left:1706px;top:15.500px" width="14" height="9" viewBox="0 0 14 9"><path d="M1 7.600L7 1.400 13 7.600" fill="none" stroke="#111" stroke-width="1.300"/></svg>
<svg class="abs" style="left:1728px;top:11px" width="18" height="18" viewBox="0 0 18 18"><path d="M8.500 1C6.500 2.200 4.300 2.800 1.700 2.800V8c0 4 2.900 7 6.800 8.600C12.400 15 15.300 12 15.300 8V2.800C12.700 2.800 10.500 2.200 8.500 1z" fill="#fff" stroke="#111" stroke-width="1.100"/><path d="M8.500 1.200v15M1.700 8.100h13.600" stroke="#111" stroke-width="1"/><circle cx="12.700" cy="12.500" r="4.300" fill="#c27a22"/><path d="M10.600 10.400l4.200 4.200M14.800 10.400l-4.200 4.200" stroke="#fff" stroke-width="1"/></svg>
<svg class="abs" style="left:1752.500px;top:13.500px" width="17" height="15" viewBox="0 0 17 15"><g fill="none" stroke="#111" stroke-width="1.200"><path d="M4.300 1.200H16v8.800H4.300"/><path d="M9.200 10V12.800M5.600 13.100H12.400"/><path d="M0.600 1.200H4.600V5.600H0.600zM2.700 5.600v8"/></g></svg>
<svg class="abs" style="left:1776px;top:12px" width="18" height="16" viewBox="0 0 18 16"><g fill="none" stroke="#111" stroke-width="1.200"><path d="M1 5.500H3.800L7 2.200V13.800L3.800 10.500H1z"/><path d="M9.500 5.500a3.500 3.500 0 0 1 0 5M11.800 3.500a6.300 6.300 0 0 1 0 9M14.100 1.500a9.200 9.200 0 0 1 0 13"/></g></svg>
<div class="abs" style="left:1791px;top:3.500px;width:80px;text-align:center;font-size:12px;line-height:17px;color:#1a1a1a;letter-spacing:-.55px">20:59</div>
<div class="abs" style="left:1791px;top:21px;width:82px;text-align:center;font-size:12px;line-height:17px;color:#1a1a1a;letter-spacing:-.3px">24/10/2020</div>
<svg class="abs" style="left:1879px;top:12px" width="24" height="24" viewBox="0 0 24 24"><path d="M1 1H16V11.500H5.500L3.500 14V11.500H1z" fill="#111"/><path d="M3.500 4h10M3.500 6.500h10M3.500 9h7" stroke="#d5deec" stroke-width="1"/><circle cx="15" cy="15.200" r="6.800" fill="#dadde4" stroke="#8a8f98" stroke-width=".8"/></svg>
<div class="abs" style="left:1888px;top:20px;width:12px;text-align:center;font-size:11px;line-height:14px;color:#222">3</div>
<div class="abs" style="left:1915px;top:0;width:1px;height:40px;background:#9aa4b4"></div>
</div>
</body></html>
